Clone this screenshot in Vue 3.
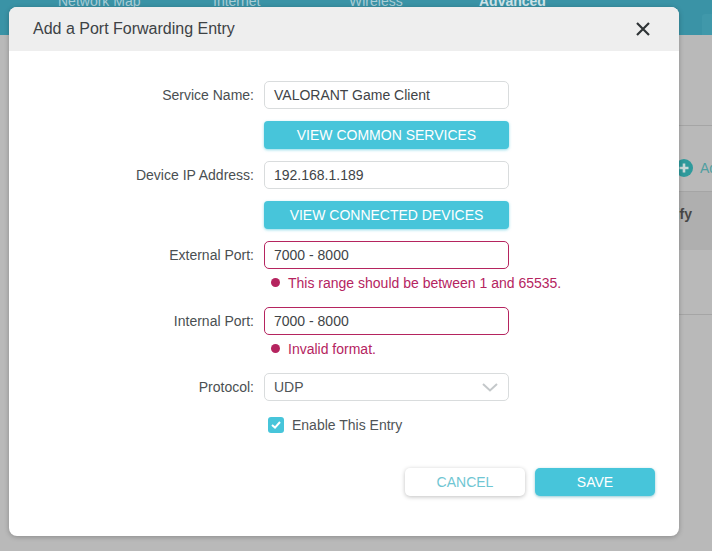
<script setup>
const nav = [
  { label: 'Network Map', cls: 'n1' },
  { label: 'Internet', cls: 'n2' },
  { label: 'Wireless', cls: 'n3' },
  { label: 'Advanced', cls: 'n4' },
]
</script>

<template>
  <div class="page">
    <div class="backdrop">
      <div class="topbar">
        <span v-for="n in nav" :key="n.label" :class="['nav', n.cls]">{{ n.label }}</span>
        <div class="topbtn"></div>
      </div>
      <div class="line l1"></div>
      <div class="add">
        <svg width="18" height="18" viewBox="0 0 18 18"><circle cx="9" cy="9" r="9" fill="#2e9a9c"/><path d="M9 4.5v9M4.5 9h9" stroke="#c8d8d8" stroke-width="2.6"/></svg>
        <span>Add</span>
      </div>
      <div class="thead"><span>Modify</span></div>
      <div class="line l2"></div>
    </div>

    <div class="modal">
      <header class="head">
        <h1>Add a Port Forwarding Entry</h1>
        <svg class="close" width="14" height="14" viewBox="0 0 14 14"><path d="M1 1l12 12M13 1L1 13" stroke="#2f3436" stroke-width="2.2"/></svg>
      </header>

      <form class="form" @submit.prevent>
        <div class="row">
          <label>Service Name:</label>
          <div class="field">VALORANT Game Client</div>
        </div>
        <div class="row"><span class="spacer"></span><button class="view" type="button">VIEW COMMON SERVICES</button></div>
        <div class="row">
          <label>Device IP Address:</label>
          <div class="field">192.168.1.189</div>
        </div>
        <div class="row"><span class="spacer"></span><button class="view" type="button">VIEW CONNECTED DEVICES</button></div>
        <div class="row">
          <label>External Port:</label>
          <div class="field bad">7000 - 8000</div>
        </div>
        <div class="error"><i></i>This range should be between 1 and 65535.</div>
        <div class="row">
          <label>Internal Port:</label>
          <div class="field bad">7000 - 8000</div>
        </div>
        <div class="error"><i></i>Invalid format.</div>
        <div class="row">
          <label>Protocol:</label>
          <div class="field select">
            UDP
            <svg width="16" height="9" viewBox="0 0 16 9"><path d="M1 1l7 6.5L15 1" fill="none" stroke="#c4c8ca" stroke-width="2"/></svg>
          </div>
        </div>
        <div class="check">
          <span class="box">
            <svg width="10" height="8" viewBox="0 0 10 8"><path d="M1 4l3 2.6L9 1" fill="none" stroke="#fff" stroke-width="2"/></svg>
          </span>
          Enable This Entry
        </div>
        <div class="actions">
          <button class="cancel" type="button">CANCEL</button>
          <button class="save" type="button">SAVE</button>
        </div>
      </form>
    </div>
  </div>
</template>

<style>
html, body { margin: 0; overflow: hidden; }
</style>

<style scoped>
.page {
  position: relative;
  width: 712px;
  height: 551px;
  overflow: hidden;
  background: #b9b9b9;
  font-family: "Liberation Sans", Arial, sans-serif;
  font-size: 14px;
  color: #4a4f52;
}
.backdrop { position: absolute; inset: 0; }
.topbar {
  position: absolute; left: 0; top: 0; right: 0; height: 35px;
  background: #3a93a6;
}
.nav { position: absolute; top: -7px; font-size: 14px; color: #a9cdd6; line-height: 16px; }
.n1 { left: 58px; }
.n2 { left: 213px; }
.n3 { left: 349px; }
.n4 { left: 479px; font-weight: 700; color: #cfe3e8; }
.topbtn { position: absolute; left: 702px; top: 14px; width: 30px; height: 21px; background: #4098aa; border-radius: 3px 3px 0 0; }
.line { position: absolute; left: 679px; right: 0; height: 1px; background: #a5a5a5; }
.l1 { top: 125px; }
.l2 { top: 314px; }
.add { position: absolute; left: 675px; top: 159px; display: flex; align-items: center; gap: 7px; color: #4f9ea0; font-size: 14px; }
.thead {
  position: absolute; left: 679px; right: 0; top: 191px; height: 59px;
  background: #afafaf; border-top: 1px solid #a5a5a5; box-sizing: border-box;
}
.thead span { position: absolute; right: 20px; top: 14px; font-weight: 700; color: #474747; font-size: 14px; white-space: nowrap; }

.modal {
  position: absolute;
  left: 9px; top: 7px;
  width: 670px; height: 529px;
  background: #fff;
  border-radius: 8px;
  box-shadow: 0 1px 5px rgba(0, 0, 0, .25);
  overflow: hidden;
}
.head {
  height: 44px;
  background: #eee;
  display: flex;
  align-items: center;
  justify-content: space-between;
  padding: 0 29px 0 24px;
}
.head h1 { margin: 0; font-size: 16px; font-weight: 400; color: #3d4245; }
.close { display: block; }

.form { padding-top: 30px; display: flex; flex-direction: column; }
.row { display: flex; align-items: center; height: 28px; margin-bottom: 12px; }
.row label, .spacer { width: 245px; flex: none; text-align: right; margin-right: 10px; }
.field {
  box-sizing: border-box;
  width: 245px; height: 28px;
  border: 1px solid #d9dcdd;
  border-radius: 5px;
  padding: 0 9px;
  display: flex; align-items: center;
  color: #3f4447;
  background: #fff;
}
.field.bad { border-color: #b5245f; }
.field.select { justify-content: space-between; padding-right: 10px; color: #4f5457; }
.view {
  width: 245px; height: 28px;
  border: 0; border-radius: 4px;
  background: #47c5da;
  color: #fff;
  font: 14px "Liberation Sans", Arial, sans-serif;
  padding: 0;
  box-shadow: 0 1px 3px rgba(71, 197, 218, .6);
}
.error {
  margin: -12px 0 0 262px;
  height: 38px;
  padding-top: 6px;
  box-sizing: border-box;
  display: flex; align-items: flex-start;
  line-height: 16px;
  color: #b5245f;
  font-size: 14px;
}
.error i { width: 9px; height: 9px; border-radius: 50%; background: #b5245f; margin: 3px 8px 0 0; }
.check { display: flex; align-items: center; margin: 4px 0 0 259px; height: 16px; gap: 8px; color: #4f5457; }
.box {
  width: 16px; height: 16px; border-radius: 3px; background: #47c5da;
  display: flex; align-items: center; justify-content: center;
}
.actions { display: flex; gap: 10px; margin: 35px 0 0 396px; }
.actions button {
  width: 120px; height: 28px; border: 0; border-radius: 5px; padding: 0;
  font: 14px "Liberation Sans", Arial, sans-serif;
}
.cancel { background: #fff; color: #6fc6d3; box-shadow: 0 1px 4px rgba(0, 0, 0, .25); }
.save { background: #47c5da; color: #fff; box-shadow: 0 1px 3px rgba(40, 150, 170, .5); }
</style>
